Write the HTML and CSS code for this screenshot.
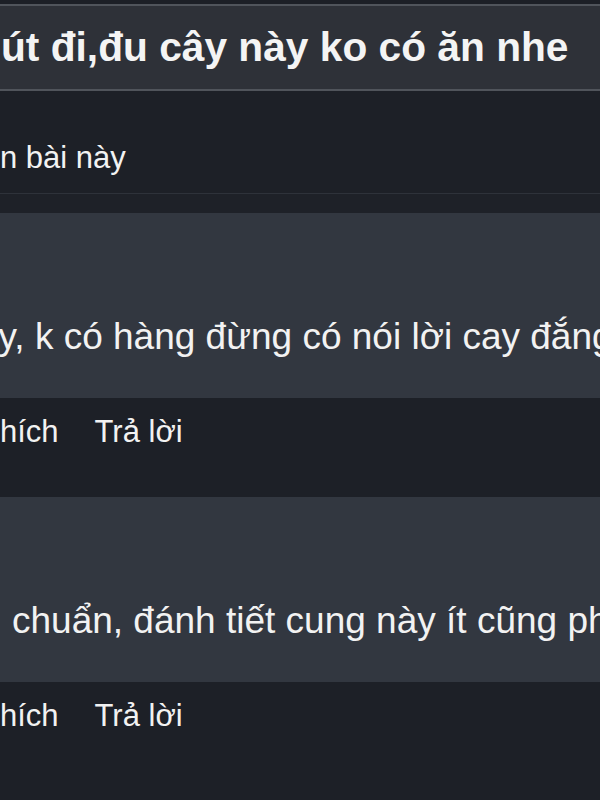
FILE: index.html
```html
<!DOCTYPE html>
<html lang="vi">
<head>
<meta charset="utf-8">
<title>Bình luận</title>
<link rel="stylesheet" href="styles.css">
</head>
<body>
<div class="page">
  <div class="topstrip"></div>
  <header class="title-bar">
    <h1 class="title">út đi,đu cây này ko có ăn nhe</h1>
  </header>
  <div class="meta">
    <span class="meta-text">n bài này</span>
  </div>
  <div class="spacer"></div>
  <section class="comment">
    <p class="comment-text first">ay, k có hàng đừng có nói lời cay đắng</p>
  </section>
  <div class="actions">
    <span class="act like">Thích</span>
    <span class="act">Trả lời</span>
  </div>
  <section class="comment">
    <p class="comment-text second">chuẩn, đánh tiết cung này ít cũng phải</p>
  </section>
  <div class="actions last">
    <span class="act like">Thích</span>
    <span class="act">Trả lời</span>
  </div>
</div>
</body>
</html>
```

FILE: styles.css
```css
html, body {
  margin: 0;
  padding: 0;
  background: #1c1f26;
  overflow: hidden;
}
.page {
  width: 600px;
  height: 800px;
  overflow: hidden;
  font-family: "Liberation Sans", Arial, sans-serif;
  color: #f2f2f2;
  display: flex;
  flex-direction: column;
}
.topstrip {
  height: 4px;
  background: #1c1f26;
  flex: none;
}
.title-bar {
  flex: none;
  height: 83px;
  background: #2e3138;
  border-top: 2px solid #50545b;
  border-bottom: 2px solid #50545b;
  display: flex;
  align-items: center;
}
.title {
  margin: 0 0 0 1px;
  font-size: 40.7px;
  font-weight: bold;
  white-space: nowrap;
  color: #f4f4f4;
}
.meta {
  flex: none;
  height: 103px;
  box-sizing: border-box;
  padding-top: 49px;
  background: #1d2027;
  border-bottom: 1px solid #2e323a;
  font-size: 31px;
  white-space: nowrap;
}
.spacer {
  flex: none;
  height: 19px;
  background: #1e2128;
}
.comment {
  flex: none;
  height: 185px;
  box-sizing: border-box;
  padding-top: 103px;
  background: #323740;
  overflow: hidden;
}
.comment-text {
  margin: 0;
  font-size: 37px;
  white-space: nowrap;
}
.comment-text.first { margin-left: -22px; }
.comment-text.second { margin-left: 12px; }
.actions {
  flex: none;
  height: 99px;
  box-sizing: border-box;
  padding-top: 16px;
  background: #1d2027;
  display: flex;
  align-items: flex-start;
  gap: 36px;
  font-size: 31px;
  margin-left: -19px;
  white-space: nowrap;
}
.actions.last { flex: 1; }
```
